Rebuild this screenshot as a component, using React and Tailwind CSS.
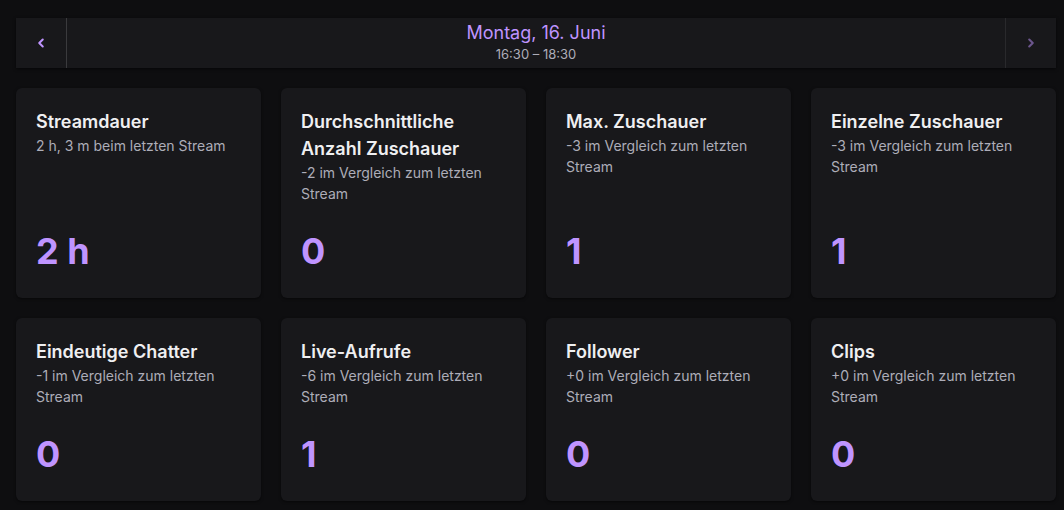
import { ChevronLeft, ChevronRight } from 'lucide-react';

const stats = [
  { title: 'Streamdauer', sub: '2 h, 3 m beim letzten Stream', value: '2 h' },
  { title: 'Durchschnittliche Anzahl Zuschauer', sub: '-2 im Vergleich zum letzten Stream', value: '0' },
  { title: 'Max. Zuschauer', sub: '-3 im Vergleich zum letzten Stream', value: '1' },
  { title: 'Einzelne Zuschauer', sub: '-3 im Vergleich zum letzten Stream', value: '1' },
  { title: 'Eindeutige Chatter', sub: '-1 im Vergleich zum letzten Stream', value: '0' },
  { title: 'Live-Aufrufe', sub: '-6 im Vergleich zum letzten Stream', value: '1' },
  { title: 'Follower', sub: '+0 im Vergleich zum letzten Stream', value: '0' },
  { title: 'Clips', sub: '+0 im Vergleich zum letzten Stream', value: '0' },
];

const StatCard = ({ title, sub, value }) => (
  <div className="flex flex-col rounded-md bg-[#18181b] p-5 shadow-[0_1px_3px_rgba(0,0,0,0.5)]">
    <h3 className="text-[18px] font-semibold leading-[27px] text-[#efeff1]">{title}</h3>
    <p className="text-[14px] leading-[21px] text-[#adadb8]">{sub}</p>
    <p className="mt-auto pt-5 text-[36px] font-bold leading-[54px] text-[#bf94ff]">{value}</p>
  </div>
);

export default function App() {
  return (
    <div className="h-[510px] overflow-hidden bg-[#0e0e10] pl-4 pr-2 pt-[18px] font-['Inter',sans-serif]">
      {/* Date switcher */}
      <div className="flex h-[50px] bg-[#18181b] shadow-[0_1px_3px_rgba(0,0,0,0.6)]">
        <button className="flex w-[51px] items-center justify-center border-r border-[#3a3a3d] text-[#bf94ff]">
          <ChevronLeft size={14} strokeWidth={3.5} />
        </button>
        <div className="flex flex-1 flex-col items-center pt-px">
          <span className="text-[18px] leading-[27px] text-[#bf94ff]">Montag, 16. Juni</span>
          <span className="text-[13px] leading-4 text-[#adadb8]">16:30 – 18:30</span>
        </div>
        <button className="flex w-[51px] items-center justify-center border-l border-[#3a3a3d] text-[#bf94ff] opacity-50">
          <ChevronRight size={14} strokeWidth={3.5} />
        </button>
      </div>

      {/* Stats */}
      <div className="mt-5 grid grid-cols-4 gap-5">
        {stats.map(s => (
          <StatCard key={s.title} {...s} />
        ))}
      </div>
    </div>
  );
}
